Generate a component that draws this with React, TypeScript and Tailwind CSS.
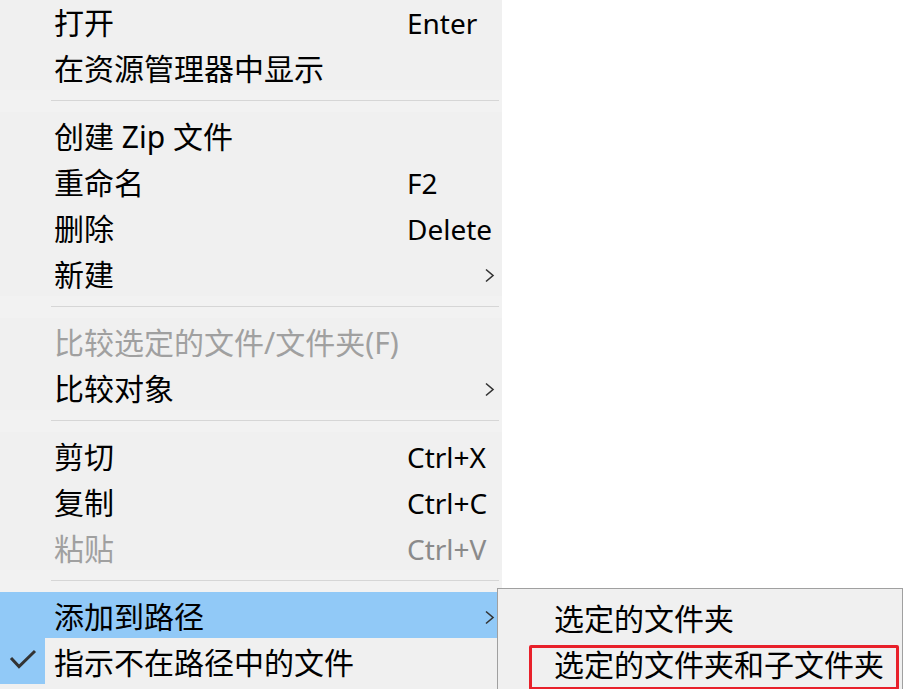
import React from "react";

type Item =
  | { kind: "sep" }
  | {
      kind: "item";
      label: string;
      shortcut?: string;
      submenu?: boolean;
      disabled?: boolean;
      active?: boolean;
      checked?: boolean;
    };

const items: Item[] = [
  { kind: "item", label: "打开", shortcut: "Enter" },
  { kind: "item", label: "在资源管理器中显示" },
  { kind: "sep" },
  { kind: "item", label: "创建 Zip 文件" },
  { kind: "item", label: "重命名", shortcut: "F2" },
  { kind: "item", label: "删除", shortcut: "Delete" },
  { kind: "item", label: "新建", submenu: true },
  { kind: "sep" },
  { kind: "item", label: "比较选定的文件/文件夹(F)", disabled: true },
  { kind: "item", label: "比较对象", submenu: true },
  { kind: "sep" },
  { kind: "item", label: "剪切", shortcut: "Ctrl+X" },
  { kind: "item", label: "复制", shortcut: "Ctrl+C" },
  { kind: "item", label: "粘贴", shortcut: "Ctrl+V", disabled: true },
  { kind: "sep" },
  { kind: "item", label: "添加到路径", submenu: true, active: true },
  { kind: "item", label: "指示不在路径中的文件", checked: true },
];

function Chevron() {
  return (
    <svg width="11" height="15" viewBox="0 0 11 15" fill="none">
      <path d="M2 1.5 L9 7.5 L2 13.5" stroke="#333" strokeWidth="1.6" />
    </svg>
  );
}

function Check() {
  return (
    <svg width="46" height="46" viewBox="0 0 46 46" fill="none">
      <path d="M11 20 L19 28.5 L35 13" stroke="#333" strokeWidth="3" />
    </svg>
  );
}

function MenuRow({ item }: { item: Extract<Item, { kind: "item" }> }) {
  const text = item.disabled ? "text-[#a0a0a0]" : "text-black";
  return (
    <div className={`grid grid-cols-[54px_353px_1fr] h-[46px] items-center ${item.active ? "bg-[#91c9f7]" : ""}`}>
      <div className={`h-full w-[45px] ${item.checked ? "bg-[#91c9f7]" : ""}`}>{item.checked && <Check />}</div>
      <span className={`pt-[4px] whitespace-nowrap ${text}`}>{item.label}</span>
      <div className="flex items-center justify-between pr-[7px] pt-[4px]">
        <span className={`text-[28px] ${item.disabled ? "text-[#8a8a8a]" : "text-black"}`}>{item.shortcut}</span>
        {item.submenu && <Chevron />}
      </div>
    </div>
  );
}

export default function App() {
  return (
    <div
      className="relative w-[905px] h-[689px] overflow-hidden bg-white text-[30px] leading-none"
      style={{ fontFamily: '"Noto Sans", "Noto Sans CJK SC", sans-serif' }}
    >
      <div className="w-[502px] bg-[#f0f0f0] -mt-[2px] pb-[10px]">
        {items.map((item, i) =>
          item.kind === "sep" ? (
            <div key={i} className="h-[22px] pt-[10px] pl-[51px] pr-[3px] bg-[#f2f2f2]">
              <div className="h-px bg-[#d6d6d6]" />
            </div>
          ) : (
            <MenuRow key={i} item={item} />
          )
        )}
      </div>

      <div className="absolute left-[497px] top-[588px] w-[406px] h-[110px] border border-[#a0a0a0] bg-[#f0f0f0] pt-[5px]">
        <div className="h-[46px] flex items-center pl-[56px] pt-[4px] whitespace-nowrap">选定的文件夹</div>
        <div className="relative h-[46px] flex items-center pl-[56px] pt-[4px] whitespace-nowrap">
          选定的文件夹和子文件夹
          <div className="absolute left-[31px] top-[5px] w-[370px] h-[45px] border-[3px] border-[#e8202a] rounded-[2px]" />
        </div>
      </div>
    </div>
  );
}
